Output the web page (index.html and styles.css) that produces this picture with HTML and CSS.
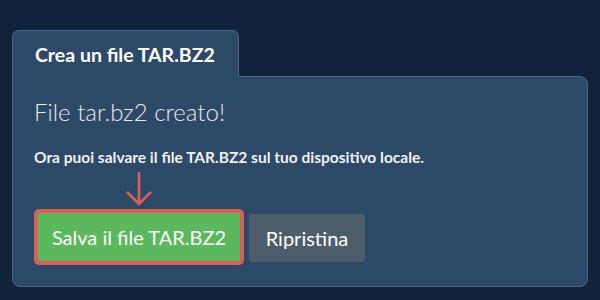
FILE: index.html
```html
<!DOCTYPE html>
<html lang="it">
<head>
  <meta charset="UTF-8">
  <meta name="viewport" content="width=device-width, initial-scale=1.0">
  <title>Crea un file TAR.BZ2</title>
  <link rel="stylesheet" href="styles.css">
</head>
<body>

<div class="container">
  <div class="tab">Crea un file TAR.BZ2</div>

  <div class="panel">
    <h2>File tar.bz2 creato!</h2>
    <p class="info">Ora puoi salvare il file TAR.BZ2 sul tuo dispositivo locale.</p>

    <div class="actions">
      <div class="highlight">
        <svg class="arrow" width="30" height="36" viewBox="0 0 30 36">
          <path d="M15 1 V33 M3 21 L15 33 L27 21" fill="none" stroke="#d9605a" stroke-width="2.6"/>
        </svg>
        <div class="outline">
          <button class="btn btn-save">Salva il file TAR.BZ2</button>
        </div>
      </div>
      <button class="btn btn-reset">Ripristina</button>
    </div>
  </div>
</div>

</body>
</html>
```

FILE: styles.css
```css
body {
  font-family: Lato, "Open Sans", sans-serif;
  background-color: #11233a;
  color: #ffffff;
  margin: 0;
  padding: 0;
}
.container {
  padding: 30px 12px 0 12px;
}
.tab {
  display: inline-block;
  position: relative;
  z-index: 1;
  box-sizing: border-box;
  width: 227px;
  height: 47px;
  padding: 12px 0 0 22px;
  margin-bottom: -1px;
  background-color: #2d4968;
  border: 1px solid #4b6684;
  border-bottom: none;
  border-radius: 7px 7px 0 0;
  font-size: 19.5px;
  font-weight: bold;
}
.panel {
  box-sizing: border-box;
  height: 211px;
  padding: 19px 21px;
  background-color: #2d4968;
  border: 1px solid #4b6684;
  border-radius: 0 8px 8px 8px;
}
.panel h2 {
  margin: 0;
  font-size: 24px;
  font-weight: 300;
  color: #e8e8e8;
  line-height: 32px;
}
.info {
  margin: 20px 0 0 0;
  font-size: 15.5px;
  font-weight: bold;
  color: #f0f0f0;
}
.actions {
  display: flex;
  align-items: flex-end;
  gap: 5px;
  margin-top: 5px;
}
.highlight {
  display: flex;
  flex-direction: column;
  align-items: center;
}
.arrow {
  display: block;
  margin-bottom: 2px;
}
.outline {
  padding: 4px;
  background-color: #d9605a;
  border-radius: 5px;
}
.btn {
  display: block;
  height: 48px;
  padding: 0;
  border: none;
  border-radius: 3px;
  font-family: Lato, "Open Sans", sans-serif;
  font-size: 20px;
  color: #ffffff;
  white-space: nowrap;
  text-align: center;
}
.btn-save {
  width: 202px;
  background-color: #5cb85c;
  border-radius: 1px;
}
.btn-reset {
  width: 116px;
  margin-bottom: 3px;
  background-color: #4e5d6c;
}
```
